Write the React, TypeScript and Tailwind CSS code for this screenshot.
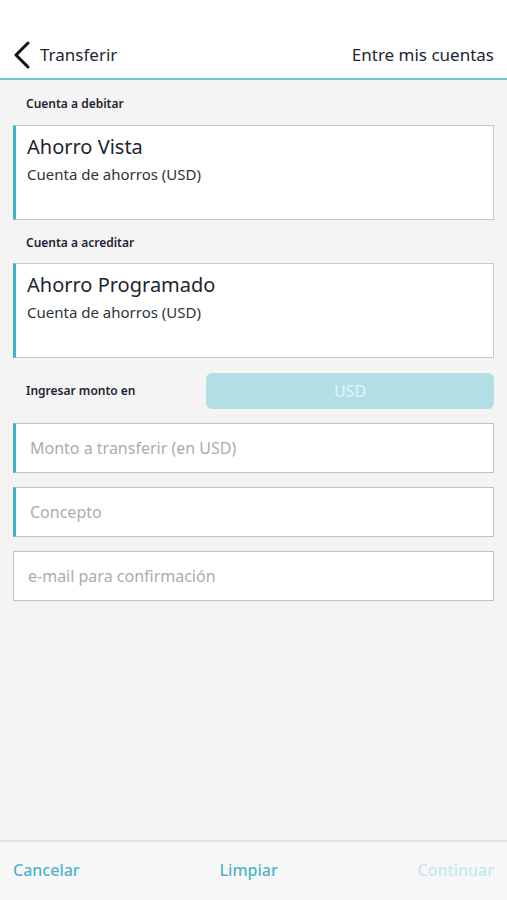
const font = { fontFamily: '"Noto Sans", Roboto, sans-serif' };

function AccountCard({ name, type }: { name: string; type: string }) {
  return (
    <div className="h-[95px] border border-[#c9c9c9] border-l-[3px] border-l-[#3bb3c9] bg-white px-[11px] pt-[7px]">
      <div className="text-[20px] leading-[28px] text-[#1d2530]">{name}</div>
      <div className="mt-[2px] text-[15px] leading-[22px] text-[#2c333b]">{type}</div>
    </div>
  );
}

function Field({ placeholder, accent }: { placeholder: string; accent?: boolean }) {
  return (
    <div
      className={
        "flex h-[50px] items-center border border-[#c4c4c4] bg-white px-[14px] text-[16px] text-[#a9adb1] " +
        (accent ? "border-l-[3px] border-l-[#3bb3c9]" : "")
      }
    >
      {placeholder}
    </div>
  );
}

export default function App() {
  return (
    <div style={font} className="flex min-h-[900px] flex-col bg-[#f4f4f4]">
      <header className="flex h-[80px] items-center justify-between border-b-2 border-[#6fc8d3] bg-white pl-[12px] pr-[13px] pt-[32px]">
        <div className="flex items-center gap-[8px]">
          <svg width="20" height="28" viewBox="0 0 20 28" fill="none">
            <polyline points="16,2 4,14 16,26" stroke="#111" strokeWidth="3" strokeLinecap="round" strokeLinejoin="round" />
          </svg>
          <span className="text-[17px] text-[#1d2530]">Transferir</span>
        </div>
        <span className="text-[17px] text-[#1d2530]">Entre mis cuentas</span>
      </header>

      <main className="flex flex-col px-[13px]">
        <div className="pl-[13px] pt-[15px] pb-[12px] text-[12px] font-semibold leading-[18px] text-[#1d2530]">
          Cuenta a debitar
        </div>
        <AccountCard name="Ahorro Vista" type="Cuenta de ahorros (USD)" />

        <div className="pl-[13px] pt-[14px] pb-[11px] text-[12px] font-semibold leading-[18px] text-[#1d2530]">
          Cuenta a acreditar
        </div>
        <AccountCard name="Ahorro Programado" type="Cuenta de ahorros (USD)" />

        <div className="mt-[15px] flex items-center">
          <div className="w-[193px] pl-[13px] text-[12px] font-semibold text-[#1d2530]">Ingresar monto en</div>
          <div className="flex h-[36px] flex-1 items-center justify-center rounded-[6px] bg-[#b1dfe5] text-[16px] text-[#e4f5f7]">
            USD
          </div>
        </div>

        <div className="mt-[14px] flex flex-col gap-[14px]">
          <Field placeholder="Monto a transferir (en USD)" accent />
          <Field placeholder="Concepto" accent />
          <Field placeholder="e-mail para confirmación" />
        </div>
      </main>

      <footer className="mt-auto flex h-[60px] items-center justify-between border-t-2 border-[#e3e3e3] bg-[#f7f7f7] px-[13px] pb-[2px] text-[16px] font-medium">
        <span className="text-[#4fb5cb]">Cancelar</span>
        <span className="text-[#4fb5cb]">Limpiar</span>
        <span className="text-[#c6e7ee]">Continuar</span>
      </footer>
    </div>
  );
}
